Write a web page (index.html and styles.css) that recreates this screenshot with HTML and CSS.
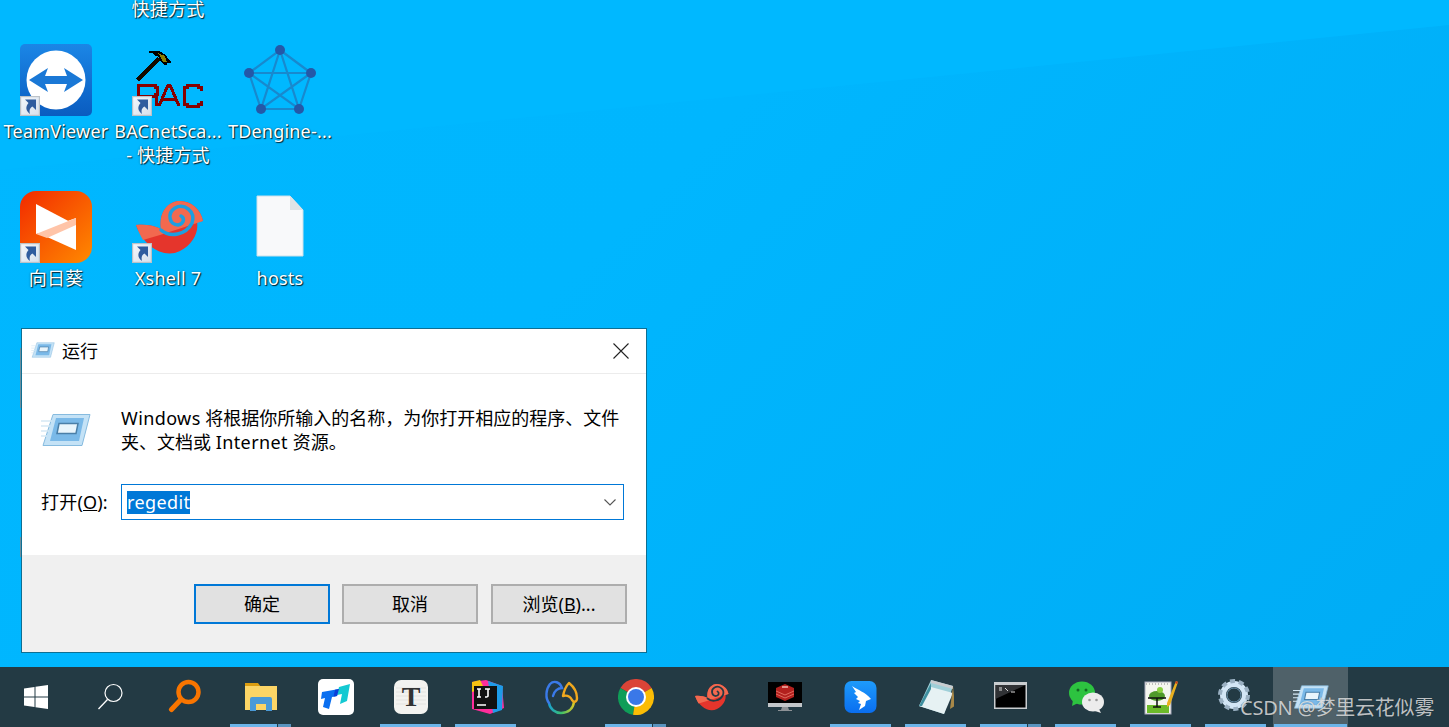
FILE: index.html
```html
<!DOCTYPE html>
<html lang="zh">
<head>
<meta charset="utf-8">
<title>运行</title>
<link rel="stylesheet" href="styles.css">
</head>
<body>
<svg class="defs" width="0" height="0" aria-hidden="true">
  <defs>
    <linearGradient id="sc" x1="0" y1="0" x2="1" y2="1"><stop offset="0" stop-color="#f4f7fb"/><stop offset="1" stop-color="#d6e0ec"/></linearGradient>
    <symbol id="shortcut" viewBox="0 0 20 20">
      <rect x=".6" y=".6" width="18.800" height="18.800" fill="url(#sc)" stroke="#bcc2c8" stroke-width="1.200"/>
      <path d="M5 3.500H16V14l-3.500-3.500C10 12 9 14 10 18 6 15 5 11 8.500 7z" fill="#2f5c9e"/>
    </symbol>
    <symbol id="run" viewBox="0 0 50 34">
      <path d="M12 1.500h37l-8 31H2z" fill="#c4e2f6" stroke="#86bbdf"/>
      <path d="M15 5h28l-5 23H9z" fill="#7ab9e8"/>
      <path d="M18 10.500h19l-2 10H16z" fill="#e9f5fc" stroke="#4a7fa8" stroke-width="1.500"/>
      <path d="M0 8h11M0 13h9M0 18h8M0 23h6" stroke="#d5e8f4" stroke-width="1.500"/>
    </symbol>
    <symbol id="xshell" viewBox="0 0 72 72">
      <path d="M4 34C12 33 22 34 29 38 27 24 33 12 46 10 58 9 69 18 71 30L65 31C67 42 60 54 48 60 32 68 12 56 4 34z" fill="#e5352c"/>
      <path d="M4 34C12 33 22 34 29 38 27 24 33 12 46 10 58 9 69 18 71 30L65 32 28 44 11 49C8 44 6 39 4 34z" fill="#f2694f"/>
      <path d="M29 39C38 47 54 44 60 32 64 20 52 12 43 17 35 22 37 34 46 34 52 33 53 27 49 25" fill="none" stroke="currentColor" stroke-width="3.500" stroke-linecap="round"/>
    </symbol>
  </defs>
</svg>

<main class="desktop">
  <div class="desk-item di-top"><span class="desk-label">快捷方式</span></div>

  <div class="desk-item di-c1 di-r1">
    <svg class="desk-icon" viewBox="0 0 72 72">
      <defs><linearGradient id="tv" x1="0" y1="0" x2="0" y2="1"><stop offset="0" stop-color="#1b86e6"/><stop offset="1" stop-color="#0a5cc0"/></linearGradient></defs>
      <rect width="72" height="72" rx="5" fill="url(#tv)"/>
      <circle cx="36" cy="36" r="29.500" fill="#fff"/>
      <path d="M9 36l19-12-3 8h22l-3-8 19 12-19 12 3-8H25l3 8z" fill="#1a78d6"/>
    </svg>
    <svg class="shortcut"><use href="#shortcut"/></svg>
    <span class="desk-label">TeamViewer</span>
  </div>

  <div class="desk-item di-c2 di-r1">
    <svg class="desk-icon" viewBox="0 0 72 72" shape-rendering="crispEdges">
      <path d="M4 35l3 3 21-22-3-3z" fill="#140a00"/>
      <path d="M17 7h10l7 4 2 4 3 2v2h-4v2h-3l-3-3-3-6h-3l-2-3h-4z" fill="#000"/>
      <path d="M26 9l7 3 2 6h-4l-3-6z" fill="#8c8000"/>
      <g fill="none" stroke="#860000" stroke-width="3">
        <path d="M6 62V41H23V43H25V50H23V52H8M21 52H24V62"/>
        <path d="M27 62L36 41H38L47 62M31 55H43"/>
        <path d="M69 47V43H66V41H55V43H52V60H55V62H66V60H69V57"/>
      </g>
    </svg>
    <svg class="shortcut"><use href="#shortcut"/></svg>
    <span class="desk-label">BACnetSca...<br>- 快捷方式</span>
  </div>

  <div class="desk-item di-c3 di-r1">
    <svg class="desk-icon td-icon" viewBox="0 0 72 72">
      <g stroke="#2570b4" stroke-width="2.200" fill="none" opacity=".65">
        <path d="M36 6L67 29 55 65H17L5 29z"/>
        <path d="M36 6L55 65 5 29H67L17 65z"/>
      </g>
      <g fill="#2458a8">
        <circle cx="36" cy="6" r="5"/><circle cx="67" cy="29" r="5"/><circle cx="55" cy="65" r="5"/><circle cx="17" cy="65" r="5"/><circle cx="5" cy="29" r="5"/>
      </g>
    </svg>
    <span class="desk-label">TDengine-...</span>
  </div>

  <div class="desk-item di-c1 di-r2">
    <svg class="desk-icon" viewBox="0 0 72 72">
      <defs><linearGradient id="sun" x1="0" y1="0" x2="1" y2="1"><stop offset="0" stop-color="#f22a00"/><stop offset="1" stop-color="#ff8a00"/></linearGradient></defs>
      <rect width="72" height="72" rx="16" fill="url(#sun)"/>
      <path d="M16 13l40 21-40 9z" fill="#fff"/>
      <path d="M56 59L16 41l40-14z" fill="#fff"/>
      <path d="M16 43l40-16v7L27 47z" fill="#ffc4a8"/>
    </svg>
    <svg class="shortcut"><use href="#shortcut"/></svg>
    <span class="desk-label">向日葵</span>
  </div>

  <div class="desk-item di-c2 di-r2">
    <svg class="desk-icon icon-xshell-desk"><use href="#xshell"/></svg>
    <svg class="shortcut"><use href="#shortcut"/></svg>
    <span class="desk-label">Xshell 7</span>
  </div>

  <div class="desk-item di-c3 di-r2">
    <svg class="desk-icon" viewBox="0 0 72 72">
      <path d="M13 5h33l13 14v46H13z" fill="#f8f9fa" stroke="#cbe0ea"/>
      <path d="M46 5v14h13z" fill="#dfe3e6"/>
    </svg>
    <span class="desk-label">hosts</span>
  </div>

  <section class="dialog">
    <header class="dlg-title">
      <svg class="dlg-title-icon"><use href="#run"/></svg>
      <span class="dlg-title-text">运行</span>
      <svg class="dlg-close" viewBox="0 0 16 16"><path d="M.5.5l15 15M15.500.5l-15 15" stroke="#222" stroke-width="1.100"/></svg>
    </header>
    <div class="dlg-body">
      <div class="dlg-intro">
        <svg class="dlg-icon"><use href="#run"/></svg>
        <p class="dlg-text"><span class="lat">Windows</span> 将根据你所输入的名称，为你打开相应的程序、文件<br>夹、文档或 <span class="lat">Internet</span> 资源。</p>
      </div>
      <div class="dlg-field">
        <label class="dlg-label">打开(<u>O</u>):</label>
        <div class="dlg-input">
          <span class="dlg-sel">regedit</span>
          <svg class="dlg-caret" viewBox="0 0 12 7"><path d="M.5.500L6 6l5.500-5.500" fill="none" stroke="#555" stroke-width="1.100"/></svg>
        </div>
      </div>
    </div>
    <footer class="dlg-foot">
      <button class="btn btn-primary">确定</button>
      <button class="btn">取消</button>
      <button class="btn">浏览(<u>B</u>)...</button>
    </footer>
  </section>
</main>

<nav class="taskbar">
  <div class="tb-start">
    <svg class="tb-win" viewBox="0 0 24 24"><path d="M0 3.500L10.500 2v9.500H0zM11.500 1.800L24 0v11.500H11.500zM0 12.500h10.500V22L0 20.500zM11.500 12.500H24V24l-12.500-1.800z" fill="#fff"/></svg>
  </div>
  <div class="tb-item">
    <svg class="tb-icon" viewBox="0 0 36 36"><circle cx="20.500" cy="14" r="8.500" fill="none" stroke="#fff" stroke-width="1.200"/><path d="M14.500 20.500L5.500 30" stroke="#fff" stroke-width="1.300"/></svg>
  </div>
  <div class="tb-item">
    <svg class="tb-icon" viewBox="0 0 36 36"><circle cx="20.500" cy="13" r="10" fill="none" stroke="#f97500" stroke-width="4.500"/><path d="M12.500 21L3.500 30.500" stroke="#f97500" stroke-width="5" stroke-linecap="round"/></svg>
  </div>
  <div class="tb-item">
    <svg class="tb-icon" viewBox="0 0 36 36"><path d="M2 4h13l3 4H2z" fill="#dc9d10"/><rect x="2" y="7" width="32" height="24" fill="#fcd566"/><path d="M7 32V20q0-2 2-2h18q2 0 2 2v12h-6v-7H13v7z" fill="#4a9ad8"/></svg>
    <i class="tb-bar"></i><i class="tb-bar-more"></i>
  </div>
  <div class="tb-item">
    <svg class="tb-icon" viewBox="0 0 36 36"><rect width="36" height="36" rx="5" fill="#fff"/><path d="M4 13l17-3-2 7-5 1-3 12-6-2 2-9-4 1z" fill="#0a6ff0"/><path d="M21 8l11-3-3 17-7 3 2-10-5 1z" fill="#14c9d2"/><path d="M17 10.700l4-.7-2 7-3.500.700z" fill="#0a3fd8"/></svg>
  </div>
  <div class="tb-item">
    <svg class="tb-icon" viewBox="0 0 36 36"><rect x="1" y="1" width="34" height="34" rx="7" fill="#f3f3f0"/><path d="M3 9h30M3 13h30M3 17h30M3 21h30M3 25h30" stroke="#e3e3e0"/><text class="tb-t" x="18" y="27" text-anchor="middle">T</text></svg>
    <i class="tb-bar tb-bar-full"></i>
  </div>
  <div class="tb-item">
    <svg class="tb-icon" viewBox="0 0 36 36"><path d="M4 3l14-2 16 6 2 22-14 6-18-5z" fill="#ff2d9b"/><path d="M20 2l15 5-1 24-9 3z" fill="#1e9be8"/><path d="M4 3l8-2 4 8-12 4z" fill="#f7c412"/><rect x="6" y="7" width="23" height="23" fill="#111"/><path d="M9 10h4M11 10v8M9 18h4M17 10h5M20 10v7q0 1-3 1M9 26h9" stroke="#fff" stroke-width="1.600" fill="none"/></svg>
    <i class="tb-bar tb-bar-full"></i>
  </div>
  <div class="tb-item">
    <svg class="tb-icon" viewBox="0 0 36 36"><defs><linearGradient id="nav" x1="0" y1="0" x2="1" y2="0"><stop offset="0" stop-color="#1aa0d0"/><stop offset=".5" stop-color="#3cc06a"/><stop offset="1" stop-color="#d8c828"/></linearGradient></defs><path d="M6 24C7 30 12 34 18 34 25 34 30 30 31 23" fill="none" stroke="url(#nav)" stroke-width="2.400" stroke-linecap="round"/><path d="M6 24C2 19 3 10 7 5 11 1 17 3 19 9 15 9 11 12 10 17" fill="none" stroke="#3a7ae8" stroke-width="2.400" stroke-linecap="round"/><path d="M20 17C21 12 23 7 26 4 31 8 34 14 34 19 34 23 31 24 29 21 27 17 24 16 20 17z" fill="none" stroke="#f0a81e" stroke-width="2.400" stroke-linejoin="round"/></svg>
  </div>
  <div class="tb-item">
    <svg class="tb-icon" viewBox="0 0 36 36"><path d="M18 18L2.400 9A18 18 0 0 1 33.600 9z" fill="#db4437"/><path d="M18 18L2.400 9A18 18 0 0 0 15 35.800z" fill="#0f9d58"/><path d="M18 18L33.600 9A18 18 0 0 1 15 35.800z" fill="#fbbc05"/><circle cx="18" cy="18" r="10" fill="#fff"/><circle cx="18" cy="18" r="8" fill="#3a78e8"/></svg>
    <i class="tb-bar"></i><i class="tb-bar-more"></i>
  </div>
  <div class="tb-item">
    <svg class="tb-icon icon-xshell-bar"><use href="#xshell"/></svg>
  </div>
  <div class="tb-item">
    <svg class="tb-icon" viewBox="0 0 36 36"><rect y="3" width="34" height="21" fill="#000"/><rect y="24" width="34" height="4" fill="#c2c6c9"/><path d="M14 28h6l1 3h3v1H10v-1h3z" fill="#8d9296"/><path d="M8 9l9-4 9 4v9l-9 4-9-4z" fill="#b3201d"/><path d="M8 12l9 4 9-4M8 15l9 4 9-4" stroke="#e06a5e" fill="none"/><path d="M14 8h6" stroke="#f3b7ae" stroke-width="1.500"/></svg>
  </div>
  <div class="tb-item">
    <svg class="tb-icon" viewBox="0 0 36 36"><defs><linearGradient id="ding" x1="0" y1="0" x2="0" y2="1"><stop offset="0" stop-color="#1e9bfb"/><stop offset="1" stop-color="#0a6ef0"/></linearGradient></defs><rect x="1.500" y="2" width="32" height="32" rx="7" fill="url(#ding)"/><path d="M9 7c6 4 13 6 19 13l-5 2-1 5-6 4 2-6-3-1 2-2-4-2 2-2-4-4 2-1z" fill="#fff"/></svg>
    <i class="tb-bar tb-bar-full"></i>
  </div>
  <div class="tb-item">
    <svg class="tb-icon" viewBox="0 0 36 36"><path d="M13 1l22 6-9 28L1 27z" fill="#9fcfd8"/><path d="M1 27L13 8l22 6-9 21z" fill="#e6f1f3"/><path d="M13 1l22 6v3L13 4z" fill="#c8ccd0"/><path d="M35 7l2 20-5 3z" fill="#a88848"/><path d="M1 27L13 4v6L4 27z" fill="#3e8f9f"/></svg>
    <i class="tb-bar tb-bar-full"></i>
  </div>
  <div class="tb-item">
    <svg class="tb-icon" viewBox="0 0 36 36"><rect x="1" y="3" width="33" height="27" fill="#c9cdd0"/><rect x="2.500" y="6" width="30" height="22.500" fill="#000"/><path d="M2.500 6h30l-30 14z" fill="#3c3f42" opacity=".8"/><path d="M6 9h3M6 11h3M12 9l3 3M18 13h4" stroke="#ddd"/></svg>
    <i class="tb-bar"></i><i class="tb-bar-more"></i>
  </div>
  <div class="tb-item">
    <svg class="tb-icon" viewBox="0 0 36 36"><ellipse cx="14" cy="14" rx="13" ry="11.500" fill="#2dc340"/><path d="M5 21l-1 6 6-3z" fill="#2dc340"/><circle cx="10" cy="11" r="1.500" fill="#126a22"/><circle cx="18" cy="11" r="1.500" fill="#126a22"/><ellipse cx="25" cy="23" rx="11" ry="9.500" fill="#ececec"/><path d="M31 30l2 4-6-2z" fill="#ececec"/><circle cx="21.500" cy="21" r="1.300" fill="#9a9a9a"/><circle cx="28.500" cy="21" r="1.300" fill="#9a9a9a"/></svg>
    <i class="tb-bar tb-bar-full"></i>
  </div>
  <div class="tb-item">
    <svg class="tb-icon" viewBox="0 0 36 36"><rect x="2" y="3" width="26" height="32" fill="#f5f6ef" stroke="#aab"/><path d="M3 5h24" stroke="#888" stroke-dasharray="1 2"/><path d="M4 26h22v8H4z" fill="#6cbb2a"/><ellipse cx="14" cy="17" rx="8" ry="5" fill="#4f9a2a"/><circle cx="17" cy="11" r="3" fill="#8ad040"/><path d="M5 19h18M14 19v9M10 28h8" stroke="#111" stroke-width="1.500"/><path d="M24 24L33 2l2 1-8 23-3 2z" fill="#e8b020"/><path d="M33 2l2 1-1 2-2-1z" fill="#c84020"/></svg>
    <i class="tb-bar tb-bar-full"></i>
  </div>
  <div class="tb-item">
    <svg class="tb-icon" viewBox="0 0 36 36"><circle cx="16" cy="16" r="11" fill="none" stroke="#d3e6f5" stroke-width="6"/><circle cx="16" cy="16" r="14" fill="none" stroke="#9ab0c2" stroke-width="4" stroke-dasharray="5 3.800"/><circle cx="16" cy="16" r="7" fill="#233a44" stroke="#6d94b0"/></svg>
    <i class="tb-bar tb-bar-full"></i>
  </div>
  <div class="tb-item tb-active">
    <svg class="tb-icon"><use href="#run"/></svg>
    <i class="tb-bar tb-bar-wide"></i>
  </div>
  <span class="watermark">CSDN @梦里云花似雾</span>
</nav>
</body>
</html>
```

FILE: styles.css
```css
* { box-sizing: border-box; }
html, body { margin: 0; height: 100%; overflow: hidden; }
body {
  display: flex;
  flex-direction: column;
  width: 1449px;
  height: 727px;
  font-family: "Noto Sans", "Noto Sans CJK SC", sans-serif;
}
.defs { position: absolute; }

.desktop {
  position: relative;
  flex: 0 0 667px;
  overflow: hidden;
  background: linear-gradient(135deg, #00b7ff 0%, #00b6fe 40%, #00acf5 100%);
}
.desktop::before {
  content: "";
  position: absolute;
  inset: 0;
  background: #00b8ff;
  clip-path: polygon(0 0, 1449px 0, 1449px 25px, 0 170px);
}

.desk-item {
  position: absolute;
  width: 112px;
  display: flex;
  flex-direction: column;
  align-items: center;
}
.di-top { left: 112px; top: -3px; }
.di-c1 { left: 0; }
.di-c2 { left: 112px; }
.di-c3 { left: 224px; }
.di-r1 { top: 44px; }
.di-r2 { top: 191px; }
.desk-icon { width: 72px; height: 72px; display: block; }
.td-icon { filter: blur(.5px); }
.icon-xshell-desk { color: #1c9fe0; }
.shortcut { position: absolute; left: 20px; top: 52px; width: 20px; height: 20px; }
.desk-label {
  margin-top: 3px;
  color: #fff;
  font-size: 18px;
  line-height: 24px;
  letter-spacing: .2px;
  text-align: center;
  white-space: nowrap;
  text-shadow: 1px 1px 1px rgba(0,0,0,.8), 0 0 2px rgba(0,0,0,.4);
}
.di-top .desk-label { margin-top: 0; }

.dialog {
  position: absolute;
  left: 21px;
  top: 328px;
  width: 626px;
  height: 325px;
  display: flex;
  flex-direction: column;
  background: #fff;
  border: 1px solid #0e6f93;
  color: #000;
}
.dialog::before, .dialog::after {
  content: "";
  position: absolute;
  left: -2px;
  width: 1px;
  background: #6d8fa0;
}
.dialog::before { top: 19px; height: 60px; }
.dialog::after { top: 208px; height: 20px; }
.dlg-title {
  height: 45px;
  flex: none;
  display: flex;
  align-items: center;
  padding: 0 17px 0 9px;
  border-bottom: 1px solid #ececec;
}
.dlg-title-icon { width: 24px; height: 16px; margin-top: -3px; }
.dlg-title-text { margin-left: 7px; font-size: 18px; line-height: 24px; }
.dlg-close { width: 16px; height: 16px; margin-left: auto; }

.dlg-body { flex: 1; display: flex; flex-direction: column; padding: 0 22px 0 19px; }
.dlg-intro { display: flex; margin-top: 32px; }
.dlg-icon { width: 50px; height: 34px; flex: none; margin-top: 7px; }
.dlg-text {
  margin: 0 0 0 30px;
  width: 504px;
  font-size: 18px;
  line-height: 24px;
}
.lat { letter-spacing: .4px; }
.dlg-field { display: flex; align-items: center; margin-top: 30px; }
.dlg-label { width: 80px; font-size: 18px; line-height: 24px; flex: none; letter-spacing: .2px; }
.dlg-input {
  flex: 1;
  height: 36px;
  display: flex;
  align-items: center;
  padding: 0 5px;
  border: 1px solid #0078d7;
}
.dlg-sel {
  background: #0078d7;
  color: #fff;
  font-size: 18px;
  line-height: 23px;
  letter-spacing: .4px;
}
.dlg-caret { width: 12px; height: 7px; margin-left: auto; margin-right: 2px; }

.dlg-foot {
  flex: 0 0 97px;
  display: flex;
  gap: 12px;
  padding: 29px 0 0 172px;
  background: #f0f0f0;
}
.btn {
  width: 136px;
  height: 40px;
  padding: 0 0 2px;
  border: 2px solid #adadad;
  background: #e1e1e1;
  color: #000;
  font: inherit;
  font-size: 18px;
}
.btn + .btn + .btn { margin-left: 1px; }
.btn-primary { border-color: #0078d7; }

.taskbar {
  position: relative;
  flex: 0 0 60px;
  display: flex;
  background: #233a44;
}
.tb-start {
  width: 73px;
  display: flex;
  align-items: center;
  justify-content: center;
}
.tb-win { width: 24px; height: 24px; margin-right: 1px; }
.tb-item {
  position: relative;
  width: 75px;
  display: flex;
  align-items: center;
  justify-content: center;
  color: #233a44;
}
.tb-icon { width: 36px; height: 36px; }
.tb-active { background: #4f6169; }
.tb-bar, .tb-bar-more {
  position: absolute;
  bottom: 0;
  height: 3px;
}
.tb-bar { left: 7px; width: 47px; background: #6cb4e8; }
.tb-bar-more { left: 55px; width: 13px; background: #5a94bf; }
.tb-bar-full { width: 61px; }
.tb-bar-wide { left: 1px; width: 73px; }
.tb-t { font-family: "Liberation Serif", serif; font-size: 28px; font-weight: 700; fill: #333; }
.watermark {
  position: absolute;
  left: 1240px;
  top: 29px;
  color: rgba(255,255,255,.72);
  font-size: 20px;
  line-height: 24px;
  letter-spacing: -.2px;
  white-space: nowrap;
  text-shadow: 0 0 1px rgba(0,0,0,.4);
}
```
